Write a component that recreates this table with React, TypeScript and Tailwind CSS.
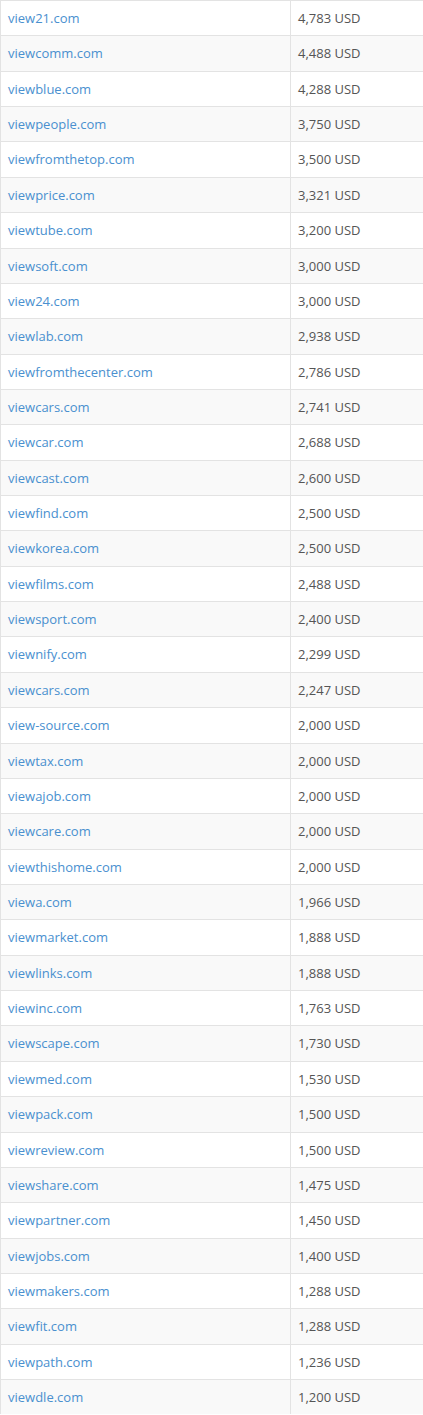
const rows: [string, string][] = [
  ['view21.com', '4,783'],
  ['viewcomm.com', '4,488'],
  ['viewblue.com', '4,288'],
  ['viewpeople.com', '3,750'],
  ['viewfromthetop.com', '3,500'],
  ['viewprice.com', '3,321'],
  ['viewtube.com', '3,200'],
  ['viewsoft.com', '3,000'],
  ['view24.com', '3,000'],
  ['viewlab.com', '2,938'],
  ['viewfromthecenter.com', '2,786'],
  ['viewcars.com', '2,741'],
  ['viewcar.com', '2,688'],
  ['viewcast.com', '2,600'],
  ['viewfind.com', '2,500'],
  ['viewkorea.com', '2,500'],
  ['viewfilms.com', '2,488'],
  ['viewsport.com', '2,400'],
  ['viewnify.com', '2,299'],
  ['viewcars.com', '2,247'],
  ['view-source.com', '2,000'],
  ['viewtax.com', '2,000'],
  ['viewajob.com', '2,000'],
  ['viewcare.com', '2,000'],
  ['viewthishome.com', '2,000'],
  ['viewa.com', '1,966'],
  ['viewmarket.com', '1,888'],
  ['viewlinks.com', '1,888'],
  ['viewinc.com', '1,763'],
  ['viewscape.com', '1,730'],
  ['viewmed.com', '1,530'],
  ['viewpack.com', '1,500'],
  ['viewreview.com', '1,500'],
  ['viewshare.com', '1,475'],
  ['viewpartner.com', '1,450'],
  ['viewjobs.com', '1,400'],
  ['viewmakers.com', '1,288'],
  ['viewfit.com', '1,288'],
  ['viewpath.com', '1,236'],
  ['viewdle.com', '1,200'],
];

export default function App() {
  return (
    <div className="w-[423px] overflow-hidden bg-white font-['Open_Sans',sans-serif] text-[13px]">
      <table className="w-[440px] border-collapse table-fixed">
        <tbody>
          {rows.map(([domain, price], i) => (
            <tr key={i} className={i % 2 === 1 ? 'bg-[#f9f9f9]' : 'bg-white'}>
              <td className="w-[290px] border-t border-l border-[#e3e3e3] py-2 pl-[7px] pr-2 leading-[18.36px]">
                <a href="#" className="text-[#4a90cf]">
                  {domain}
                </a>
              </td>
              <td className="border-t border-l border-[#e3e3e3] py-2 pl-[7px] pr-2 leading-[18.36px] text-[#555]">
                {price} USD
              </td>
            </tr>
          ))}
        </tbody>
      </table>
    </div>
  );
}
